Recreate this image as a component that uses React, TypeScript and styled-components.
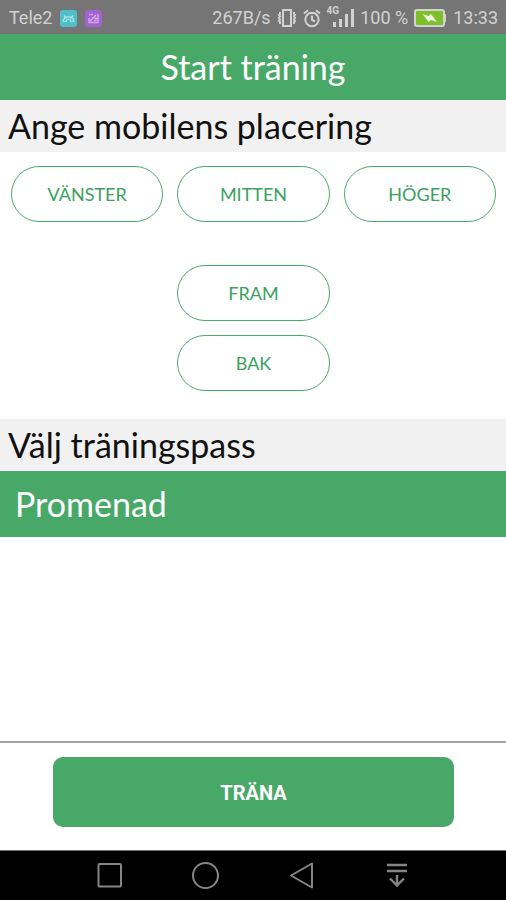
import React, { useState } from 'react';
import styled, { createGlobalStyle } from 'styled-components';

const green = '#48a868';
const statusInk = '#d2d2d2';

const GlobalStyle = createGlobalStyle`
  *, *::before, *::after { box-sizing: border-box; }
  html, body, #root { height: 100%; }
  body {
    margin: 0;
    background: #fff;
    font-family: Lato, 'Open Sans', sans-serif;
  }
  button { font: inherit; cursor: pointer; }
`;

const Screen = styled.div`
  display: flex;
  flex-direction: column;
  min-height: 100%;
`;

const StatusBar = styled.div`
  display: flex;
  align-items: center;
  justify-content: space-between;
  height: 34px;
  padding: 2px 8px 0 9px;
  background: #757575;
  color: ${statusInk};
  font-family: Roboto, sans-serif;
  font-size: 18px;
  line-height: 24px;
  white-space: nowrap;
`;

const StatusGroup = styled.div<{ $gap: number }>`
  display: flex;
  align-items: center;
  gap: ${(p) => p.$gap}px;
`;

const TitleBar = styled.header`
  display: flex;
  align-items: center;
  justify-content: center;
  height: 66px;
  background: ${green};
  color: #fff;
`;

const Title = styled.h1`
  margin: 0;
  font-size: 34px;
  font-weight: 400;
  line-height: 40px;
`;

const Main = styled.main`
  flex: 1;
  display: flex;
  flex-direction: column;
`;

const SectionHeading = styled.h2`
  margin: 0;
  padding: 6px 8px;
  background: #f1f1f1;
  color: #111;
  font-size: 34px;
  font-weight: 400;
  line-height: 40px;
`;

const PlacementGrid = styled.div`
  display: grid;
  grid-template-columns: repeat(3, 1fr);
  gap: 14px;
  padding: 14px 10px 28px 11px;
`;

const PlacementButton = styled.button<{ $row: number; $column: number }>`
  grid-row: ${(p) => p.$row};
  grid-column: ${(p) => p.$column};
  height: 56px;
  padding: 0;
  margin-top: ${(p) => (p.$row === 2 ? 29 : 0)}px;
  border: 1px solid ${green};
  border-radius: 28px;
  background: #fff;
  color: #3aa161;
  font-size: 18px;
  line-height: 24px;
`;

const WorkoutList = styled.ul`
  flex: 1;
  margin: 0;
  padding: 0;
  list-style: none;
  border-bottom: 2px solid #a3a3a3;
`;

const WorkoutButton = styled.button`
  display: block;
  width: 100%;
  padding: 13px 15px;
  border: 0;
  background: ${green};
  color: #fff;
  font-size: 34px;
  line-height: 40px;
  text-align: left;
`;

const Footer = styled.footer`
  padding: 14px 52px 23px 53px;
`;

const TrainButton = styled.button`
  display: block;
  width: 100%;
  height: 70px;
  padding: 2px 0 0;
  border: 0;
  border-radius: 10px;
  background: ${green};
  color: #fff;
  font-family: Roboto, sans-serif;
  font-size: 20px;
  font-weight: 700;
  line-height: 24px;
`;

const NavBar = styled.nav`
  display: grid;
  grid-template-columns: repeat(4, 1fr);
  height: 50px;
  padding: 0 62px;
  border-top: 1px solid #777;
  background: #000;
`;

const NavButton = styled.button`
  display: flex;
  align-items: center;
  justify-content: center;
  padding: 0;
  border: 0;
  background: none;
  color: #858585;
`;

const RobotIcon = () => (
  <svg width="17" height="17" viewBox="0 0 17 17" fill="none" aria-hidden="true">
    <rect width="17" height="17" rx="3" fill="#50bfc7" />
    <path d="M3 11.500c.5-3 2-4.500 5.500-4.500s5 1.500 5.500 4.500M5.500 7.500L4 5.500M11.500 7.500L13 5.500" stroke="#a5e0e3" strokeWidth="1.500" />
    <path d="M3 11.500h3.500v-2M14 11.500h-3.500v-2M6.500 9.500h4" stroke="#a5e0e3" />
  </svg>
);

const PictureIcon = () => (
  <svg width="17" height="17" viewBox="0 0 17 17" fill="none" aria-hidden="true">
    <rect width="17" height="17" rx="3" fill="#a462d0" />
    <path d="M4 13V8M4 4.500h4M13 4v9M4 12.500h9" stroke="#cfa6ea" strokeWidth="1.400" />
    <path d="M5 11l6-6M9.500 8.500h3M9.500 10.500h2" stroke="#d8b5ee" strokeWidth="1.400" />
  </svg>
);

const VibrateIcon = () => (
  <svg width="20" height="20" viewBox="0 0 20 20" fill="none" stroke={statusInk} aria-hidden="true">
    <rect x="6" y="2" width="8" height="16" strokeWidth="2" />
    <path d="M3 4v2l-1 1 1 1.500-1 1.500 1 1.500-1 1.500 1 1v2M17 4v2l1 1-1 1.500 1 1.500-1 1.500 1 1.500-1 1v2" strokeWidth="2" />
  </svg>
);

const AlarmIcon = () => (
  <svg width="18" height="19" viewBox="0 0 18 19" fill="none" stroke={statusInk} strokeWidth="2" aria-hidden="true">
    <circle cx="9" cy="10.500" r="6.700" />
    <path d="M9 6.500v4.500l3 1.500M1 4.500L5 1.300M17 4.500L13 1.300" />
  </svg>
);

const SignalWrap = styled.span`
  display: flex;
  align-items: flex-start;
  height: 24px;
  font-size: 10px;
  font-weight: 700;
  line-height: 10px;
`;

const SignalBars = styled.svg`
  margin-left: -6px;
`;

const Signal = () => (
  <SignalWrap>
    4G
    <SignalBars width="21" height="22" viewBox="0 0 21 22" fill={statusInk} aria-hidden="true">
      <rect x="0" y="16" width="3" height="5" />
      <rect x="6" y="13" width="3" height="8" />
      <rect x="12" y="8" width="3" height="13" />
      <rect x="18" y="3" width="3" height="18" />
    </SignalBars>
  </SignalWrap>
);

const BatteryIcon = () => (
  <svg width="33" height="18" viewBox="0 0 33 18" aria-hidden="true">
    <path d="M30 5.500h1.500v7H30z" fill={statusInk} stroke={statusInk} />
    <rect x="1" y="1" width="29" height="16" rx="2" fill="#7cbf28" stroke={statusInk} strokeWidth="2" />
    <path d="M8.500 5l6 2L17 5l6 8-6-2-2.500 2z" fill="#eef6e4" />
  </svg>
);

const placements = [
  { label: 'VÄNSTER', row: 1, column: 1 },
  { label: 'MITTEN', row: 1, column: 2 },
  { label: 'HÖGER', row: 1, column: 3 },
  { label: 'FRAM', row: 2, column: 2 },
  { label: 'BAK', row: 3, column: 2 },
];

const navItems = [
  { label: 'Senaste appar', shape: <rect x="3.500" y="3" width="22.500" height="22.500" rx="1" /> },
  { label: 'Hem', shape: <circle cx="14.500" cy="14.500" r="12.500" /> },
  { label: 'Tillbaka', shape: <path d="M26 2.500v24L5 14.500z" strokeLinejoin="round" /> },
  {
    label: 'Aviseringar',
    shape: <path d="M5 4h20M5 10h20M15 14v10M8 17.500l7 7 7-7" strokeWidth="2.400" />,
  },
];

export default function App() {
  const [placement, setPlacement] = useState('');
  return (
    <>
      <GlobalStyle />
      <Screen>
        <StatusBar>
          <StatusGroup $gap={8}>
            <span>Tele2</span>
            <RobotIcon />
            <PictureIcon />
          </StatusGroup>
          <StatusGroup $gap={6}>
            <span>267B/s</span>
            <VibrateIcon />
            <AlarmIcon />
            <Signal />
            <span>100 %</span>
            <BatteryIcon />
            <span>13:33</span>
          </StatusGroup>
        </StatusBar>
        <TitleBar>
          <Title>Start träning</Title>
        </TitleBar>
        <Main>
          <SectionHeading>Ange mobilens placering</SectionHeading>
          <PlacementGrid>
            {placements.map((p) => (
              <PlacementButton
                key={p.label}
                type="button"
                $row={p.row}
                $column={p.column}
                aria-pressed={placement === p.label}
                onClick={() => setPlacement(p.label)}
              >
                {p.label}
              </PlacementButton>
            ))}
          </PlacementGrid>
          <SectionHeading>Välj träningspass</SectionHeading>
          <WorkoutList>
            <li>
              <WorkoutButton type="button">Promenad</WorkoutButton>
            </li>
          </WorkoutList>
        </Main>
        <Footer>
          <TrainButton type="button">TRÄNA</TrainButton>
        </Footer>
        <NavBar>
          {navItems.map((item) => (
            <NavButton key={item.label} type="button" aria-label={item.label}>
              <svg width="29" height="29" viewBox="0 0 29 29" fill="none" stroke="currentColor" strokeWidth="2" aria-hidden="true">
                {item.shape}
              </svg>
            </NavButton>
          ))}
        </NavBar>
      </Screen>
    </>
  );
}
